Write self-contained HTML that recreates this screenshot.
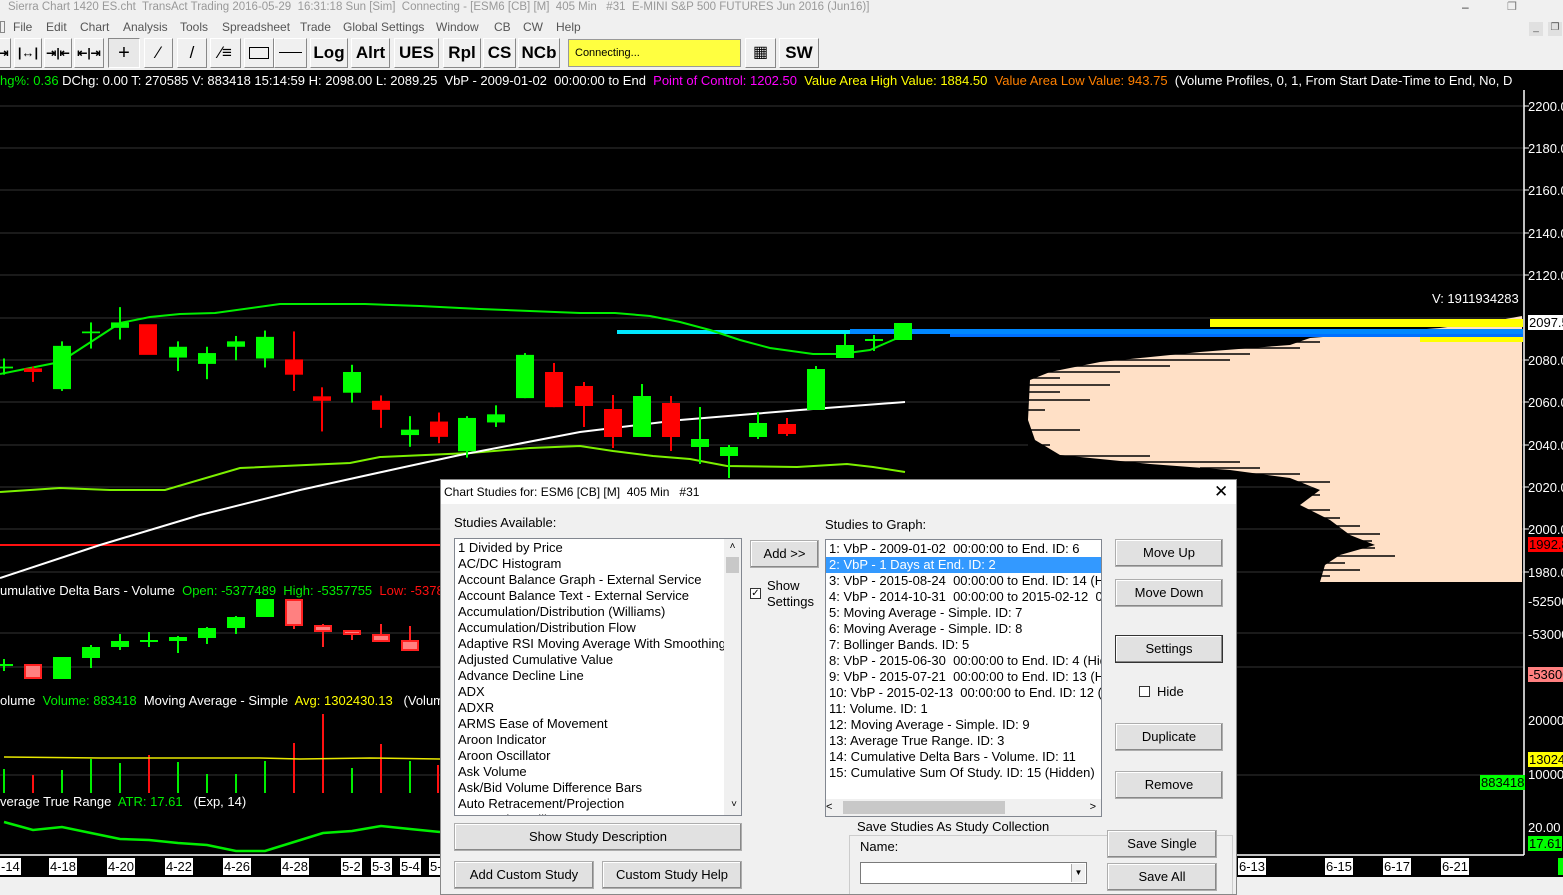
<!DOCTYPE html>
<html><head><meta charset="utf-8">
<style>
*{margin:0;padding:0;box-sizing:border-box}
body{width:1563px;height:895px;overflow:hidden;background:#f0f0f0;font-family:"Liberation Sans",sans-serif;position:relative}
.abs{position:absolute;white-space:pre}
.title{left:8px;top:0;font-size:11.5px;color:#999;line-height:14px}
.menu{top:20px;font-size:12px;color:#555;line-height:14px}
.tb{position:absolute;top:38px;height:30px;background:#f0f0f0;border:1px solid;border-color:#fff #888 #888 #fff;font-weight:bold;font-size:17px;text-align:center;line-height:28px;color:#000}
.ax{position:absolute;left:1528px;font-size:13px;color:#fff;line-height:15px;white-space:nowrap}
.dt{position:absolute;top:858px;background:#fff;color:#000;font-size:13px;line-height:17px;padding:0 1px;white-space:nowrap}
.dlg{position:absolute;left:440px;top:479px;width:797px;height:416px;background:#f0f0f0;border:1px solid #888;overflow:hidden}
.dlg .t{position:absolute;left:0;top:0;width:795px;height:24px;background:#fff;font-size:12px;line-height:24px;padding-left:3px;white-space:pre}
.btn{position:absolute;background:#e1e1e1;border:1px solid #adadad;font-size:13px;text-align:center;color:#000;box-shadow:inset -1px -1px 0 #888,inset 1px 1px 0 #fff}
.lst{position:absolute;background:#fff;border:1px solid #828790;font-size:13px;line-height:16px;overflow:hidden}
.lst div{white-space:pre;padding-left:3px;height:16px}
.lbl{position:absolute;font-size:13px;white-space:nowrap}
</style></head><body>
<div class="abs title">Sierra Chart 1420 ES.cht  TransAct Trading 2016-05-29  16:31:18 Sun [Sim]  Connecting - [ESM6 [CB] [M]  405 Min   #31  E-MINI S&amp;P 500 FUTURES Jun 2016 (Jun16)]</div>
<div class="abs" style="left:1462px;top:0;font-size:12px;color:#333">–</div>
<div class="abs" style="left:1507px;top:0;font-size:11px;color:#777">❐</div>
<div class="abs" style="left:1529px;top:22px;width:14px;height:14px;background:#e0e0e0;font-size:10px;text-align:center;color:#555">_</div>
<div class="abs" style="left:1548px;top:22px;width:14px;height:14px;background:#e0e0e0;font-size:10px;text-align:center;color:#555">❐</div>
<div class="abs menu" style="left:0;width:5px;height:12px;border:1px solid #888;top:21px"></div>
<div class="abs menu" style="left:13px">File</div><div class="abs menu" style="left:46px">Edit</div><div class="abs menu" style="left:80px">Chart</div><div class="abs menu" style="left:123px">Analysis</div><div class="abs menu" style="left:180px">Tools</div><div class="abs menu" style="left:222px">Spreadsheet</div><div class="abs menu" style="left:300px">Trade</div><div class="abs menu" style="left:343px">Global Settings</div><div class="abs menu" style="left:436px">Window</div><div class="abs menu" style="left:494px">CB</div><div class="abs menu" style="left:523px">CW</div><div class="abs menu" style="left:556px">Help</div>
<div class="tb" style="left:-4px;width:15px;font-size:12px">⇥</div>
<div class="tb" style="left:14px;width:28px;font-size:13px">|↔|</div>
<div class="tb" style="left:44px;width:28px;font-size:12px">⇥|⇤</div>
<div class="tb" style="left:74px;width:30px;font-size:12px">⇤|⇥</div>
<div class="tb" style="left:108px;width:32px;font-size:20px;font-weight:normal;border-color:#888 #fff #fff #888;background:#e8e8e8">+</div>
<div class="tb" style="left:144px;width:29px;font-weight:normal">⁄</div>
<div class="tb" style="left:177px;width:30px;font-weight:normal">/</div>
<div class="tb" style="left:210px;width:31px;font-weight:normal">⁄≡</div>
<div class="tb" style="left:244px;width:30px"><div style="margin:8px 4px;height:12px;border:1px solid #000"></div></div>
<div class="tb" style="left:274px;width:33px"><div style="margin:13px 4px;height:1px;background:#000"></div></div>
<div class="tb" style="left:310px;width:38px">Log</div>
<div class="tb" style="left:351px;width:39px">Alrt</div>
<div class="tb" style="left:394px;width:45px">UES</div>
<div class="tb" style="left:443px;width:38px">Rpl</div>
<div class="tb" style="left:483px;width:33px">CS</div>
<div class="tb" style="left:518px;width:42px">NCb</div>
<div class="abs" style="left:568px;top:39px;width:173px;height:28px;background:#ffff40;border:1px solid #999;font-size:11px;line-height:26px;padding-left:6px">Connecting...</div>
<div class="tb" style="left:745px;width:31px;font-size:16px;font-weight:normal">▦</div>
<div class="tb" style="left:779px;width:40px">SW</div>

<svg style="position:absolute;left:0;top:70px" width="1563" height="807" viewBox="0 70 1563 807">
<rect x="0" y="70" width="1563" height="807" fill="#000"/>
<g stroke="#333" stroke-width="1">
<line x1="0" y1="106" x2="1523" y2="106"/><line x1="0" y1="148" x2="1523" y2="148"/><line x1="0" y1="190" x2="1523" y2="190"/><line x1="0" y1="233" x2="1523" y2="233"/><line x1="0" y1="275" x2="1523" y2="275"/><line x1="0" y1="318" x2="1523" y2="318"/><line x1="0" y1="360" x2="1523" y2="360"/><line x1="0" y1="402" x2="1523" y2="402"/><line x1="0" y1="445" x2="1523" y2="445"/><line x1="0" y1="487" x2="1523" y2="487"/><line x1="0" y1="529" x2="1523" y2="529"/><line x1="0" y1="572" x2="1523" y2="572"/>
<line x1="0" y1="633" x2="1523" y2="633"/><line x1="0" y1="667" x2="1523" y2="667"/><line x1="0" y1="775" x2="1523" y2="775"/>
</g>
<polygon fill="#ffe0c6" points="1522,316 1500,320 1440,328 1310,338 1290,345 1200,352 1100,362 1050,372 1030,380 1028,420 1035,440 1060,455 1150,464 1230,470 1290,478 1320,490 1300,505 1330,520 1350,535 1375,545 1340,555 1325,565 1320,582 1522,582"/>
<g stroke="#000" stroke-width="1.5">
<line x1="1200" y1="342" x2="1320" y2="342"/><line x1="1150" y1="348" x2="1300" y2="348"/><line x1="1100" y1="354" x2="1250" y2="354"/><line x1="1060" y1="360" x2="1230" y2="360"/><line x1="1040" y1="366" x2="1170" y2="366"/><line x1="1030" y1="372" x2="1120" y2="372"/><line x1="1030" y1="378" x2="1060" y2="378"/>
<line x1="1028" y1="385" x2="1110" y2="385"/><line x1="1028" y1="392" x2="1060" y2="392"/><line x1="1028" y1="400" x2="1090" y2="400"/><line x1="1028" y1="410" x2="1045" y2="410"/><line x1="1028" y1="430" x2="1080" y2="430"/><line x1="1028" y1="445" x2="1050" y2="445"/>
<line x1="1060" y1="456" x2="1150" y2="456"/><line x1="1100" y1="462" x2="1240" y2="462"/><line x1="1200" y1="468" x2="1260" y2="468"/><line x1="1230" y1="474" x2="1300" y2="474"/>
<line x1="1280" y1="482" x2="1330" y2="482"/><line x1="1290" y1="495" x2="1320" y2="495"/><line x1="1300" y1="510" x2="1330" y2="510"/><line x1="1300" y1="518" x2="1340" y2="518"/><line x1="1320" y1="526" x2="1360" y2="526"/><line x1="1330" y1="534" x2="1380" y2="534"/>
<line x1="1330" y1="541" x2="1372" y2="541"/><line x1="1330" y1="548" x2="1375" y2="548"/><line x1="1320" y1="556" x2="1395" y2="556"/><line x1="1320" y1="563" x2="1345" y2="563"/><line x1="1320" y1="570" x2="1360" y2="570"/><line x1="1320" y1="576" x2="1330" y2="576"/>
</g>
<rect x="1210" y="319" width="313" height="8" fill="#ffff00"/>
<rect x="1420" y="337" width="103" height="5" fill="#ffff00"/>
<rect x="617" y="330" width="240" height="4" fill="#00e8ff"/>
<rect x="850" y="329" width="673" height="5" fill="#0088ff"/>
<rect x="950" y="334" width="573" height="3" fill="#0070ff"/>
<line x1="0" y1="545" x2="440" y2="545" stroke="#ff1010" stroke-width="2"/>
<polyline fill="none" stroke="#00ee00" stroke-width="2" points="0,374 60,362 120,323 150,317 180,314 215,313 280,304 365,304 420,306 480,309 580,313 615,313 650,316 680,322 710,330 740,340 770,348 813,354 840,354 870,350 893,340 905,335"/>
<polyline fill="none" stroke="#7cf000" stroke-width="2" points="0,492 60,488 110,490 165,490 240,468 350,463 380,457 470,453 530,448 580,446 613,451 653,456 690,459 727,466 797,467 847,464 873,467 905,472"/>
<polyline fill="none" stroke="#fff" stroke-width="2" points="0,578 100,545 200,515 300,490 400,468 460,455 580,432 680,420 800,410 905,402"/>
<g stroke-width="2">
<g transform="translate(0,290) scale(1,0.901) translate(0,-290)">
<g stroke="#00ff00" fill="#00ff00">
<line x1="4" y1="366" x2="4" y2="384"/><line x1="-5" y1="376" x2="13" y2="376"/>
<line x1="62" y1="347" x2="62" y2="402"/><rect x="53" y="352" width="18" height="48" stroke="none"/>
<line x1="91" y1="326" x2="91" y2="355"/><line x1="82" y1="337" x2="100" y2="337"/>
<line x1="120" y1="309" x2="120" y2="345"/><rect x="111" y="326" width="18" height="6" stroke="none"/>
<line x1="178" y1="347" x2="178" y2="380"/><rect x="169" y="353" width="18" height="12" stroke="none"/>
<line x1="207" y1="353" x2="207" y2="389"/><rect x="198" y="360" width="18" height="12" stroke="none"/>
<line x1="236" y1="341" x2="236" y2="368"/><rect x="227" y="347" width="18" height="6" stroke="none"/>
<line x1="265" y1="335" x2="265" y2="376"/><rect x="256" y="342" width="18" height="24" stroke="none"/>
<line x1="352" y1="373" x2="352" y2="415"/><rect x="343" y="381" width="18" height="23" stroke="none"/>
<line x1="410" y1="430" x2="410" y2="464"/><rect x="401" y="445" width="18" height="6" stroke="none"/>
<line x1="467" y1="430" x2="467" y2="476"/><rect x="458" y="432" width="18" height="37" stroke="none"/>
<line x1="496" y1="418" x2="496" y2="442"/><rect x="487" y="428" width="18" height="9" stroke="none"/>
<line x1="525" y1="360" x2="525" y2="410"/><rect x="516" y="362" width="18" height="48" stroke="none"/>
</g>
<g stroke="#ff0000" fill="#ff0000">
<line x1="33" y1="375" x2="33" y2="392"/><rect x="24" y="377" width="18" height="4" stroke="none"/>
<rect x="139" y="328" width="18" height="34" stroke="none"/>
<line x1="294" y1="336" x2="294" y2="402"/><rect x="285" y="367" width="18" height="17" stroke="none"/>
<line x1="322" y1="398" x2="322" y2="447"/><rect x="313" y="408" width="18" height="5" stroke="none"/>
<line x1="381" y1="407" x2="381" y2="443"/><rect x="372" y="413" width="18" height="10" stroke="none"/>
<line x1="439" y1="426" x2="439" y2="460"/><rect x="430" y="436" width="18" height="17" stroke="none"/>
<line x1="554" y1="371" x2="554" y2="420"/><rect x="545" y="381" width="18" height="39" stroke="none"/>
</g>
</g>
<g stroke="#00ff00" fill="#00ff00">
<line x1="642" y1="384" x2="642" y2="437"/><rect x="633" y="396" width="18" height="41" stroke="none"/>
<line x1="700" y1="407" x2="700" y2="464"/><rect x="691" y="439" width="18" height="8" stroke="none"/>
<line x1="729" y1="445" x2="729" y2="478"/><rect x="720" y="447" width="18" height="9" stroke="none"/>
<line x1="758" y1="412" x2="758" y2="439"/><rect x="749" y="423" width="18" height="14" stroke="none"/>
<line x1="816" y1="366" x2="816" y2="410"/><rect x="807" y="369" width="18" height="41" stroke="none"/>
<line x1="845" y1="334" x2="845" y2="358"/><rect x="836" y="345" width="18" height="13" stroke="none"/>
<line x1="874" y1="335" x2="874" y2="351"/><line x1="865" y1="340" x2="883" y2="340"/>
<rect x="894" y="323" width="18" height="17" stroke="none"/>
</g>
<g stroke="#ff0000" fill="#ff0000">
<line x1="584" y1="382" x2="584" y2="427"/><rect x="575" y="386" width="18" height="20" stroke="none"/>
<line x1="613" y1="395" x2="613" y2="448"/><rect x="604" y="409" width="18" height="28" stroke="none"/>
<line x1="671" y1="396" x2="671" y2="451"/><rect x="662" y="403" width="18" height="34" stroke="none"/>
<line x1="787" y1="418" x2="787" y2="436"/><rect x="778" y="424" width="18" height="10" stroke="none"/>
</g>
<g stroke="#00ff00" fill="#00ff00">
<line x1="-5" y1="665" x2="13" y2="665"/><line x1="4" y1="659" x2="4" y2="671"/>
<rect x="53" y="657" width="18" height="22" stroke="none"/>
<line x1="91" y1="645" x2="91" y2="668"/><rect x="82" y="647" width="18" height="11" stroke="none"/>
<line x1="120" y1="634" x2="120" y2="650"/><rect x="111" y="641" width="18" height="6" stroke="none"/>
<line x1="149" y1="632" x2="149" y2="647"/><line x1="140" y1="641" x2="158" y2="641"/>
<line x1="178" y1="636" x2="178" y2="653"/><rect x="169" y="637" width="18" height="4" stroke="none"/>
<line x1="207" y1="627" x2="207" y2="644"/><rect x="198" y="628" width="18" height="10" stroke="none"/>
<line x1="236" y1="616" x2="236" y2="634"/><rect x="227" y="617" width="18" height="11" stroke="none"/>
<rect x="256" y="599" width="18" height="18" stroke="none"/>
</g>
<g stroke="#ff2020" fill="#ff8080">
<rect x="25" y="665" width="16" height="13"/>
<rect x="286" y="600" width="16" height="25"/><line x1="294" y1="625" x2="294" y2="629"/>
<line x1="323" y1="624" x2="323" y2="647"/><rect x="315" y="626" width="16" height="5"/>
<line x1="352" y1="630" x2="352" y2="640"/><rect x="344" y="631" width="16" height="3"/>
<line x1="381" y1="624" x2="381" y2="642"/><rect x="373" y="635" width="16" height="6"/>
<line x1="410" y1="626" x2="410" y2="650"/><rect x="402" y="641" width="16" height="9"/>
</g>
<g stroke="#00ee00"><line x1="4" y1="769" x2="4" y2="793"/><line x1="62" y1="770" x2="62" y2="793"/><line x1="91" y1="759" x2="91" y2="793"/><line x1="120" y1="763" x2="120" y2="793"/><line x1="178" y1="762" x2="178" y2="793"/><line x1="207" y1="774" x2="207" y2="793"/><line x1="236" y1="774" x2="236" y2="793"/><line x1="265" y1="761" x2="265" y2="793"/><line x1="352" y1="768" x2="352" y2="793"/><line x1="410" y1="761" x2="410" y2="793"/></g>
<g stroke="#ff1010"><line x1="33" y1="775" x2="33" y2="793"/><line x1="149" y1="755" x2="149" y2="793"/><line x1="294" y1="743" x2="294" y2="793"/><line x1="323" y1="714" x2="323" y2="793"/><line x1="381" y1="744" x2="381" y2="793"/><line x1="438" y1="765" x2="438" y2="793"/></g>
</g>
<polyline fill="none" stroke="#e8e800" stroke-width="1.5" points="4,757 100,758 200,758 260,758 300,759 370,758 440,759"/>
<polyline fill="none" stroke="#00ee00" stroke-width="2.5" points="4,822 33,830 62,827 91,833 120,839 149,840 178,843 207,845 236,851 265,851 294,842 323,833 352,831 381,826 410,829 440,832"/>
<line x1="1524" y1="90" x2="1524" y2="855" stroke="#fff" stroke-width="1.5"/>
<line x1="0" y1="855" x2="1524" y2="855" stroke="#fff" stroke-width="1.5"/>
<g stroke="#fff"><line x1="1524" y1="106" x2="1529" y2="106"/><line x1="1524" y1="148" x2="1529" y2="148"/><line x1="1524" y1="190" x2="1529" y2="190"/><line x1="1524" y1="233" x2="1529" y2="233"/><line x1="1524" y1="275" x2="1529" y2="275"/><line x1="1524" y1="360" x2="1529" y2="360"/><line x1="1524" y1="402" x2="1529" y2="402"/><line x1="1524" y1="445" x2="1529" y2="445"/><line x1="1524" y1="487" x2="1529" y2="487"/><line x1="1524" y1="529" x2="1529" y2="529"/><line x1="1524" y1="572" x2="1529" y2="572"/></g>
</svg>
<div class="abs" style="left:0;top:73px;font-size:13px;color:#fff;line-height:15px"><span style="color:#00ee00">hg%: 0.36</span> DChg: 0.00 T: 270585 V: 883418 15:14:59 H: 2098.00 L: 2089.25  VbP - 2009-01-02  00:00:00 to End  <span style="color:#ff00ff">Point of Control: 1202.50</span>  <span style="color:#ffff00">Value Area High Value: 1884.50</span>  <span style="color:#ff8000">Value Area Low Value: 943.75</span>  (Volume Profiles, 0, 1, From Start Date-Time to End, No, D</div>
<div class="abs" style="left:1432px;top:291px;font-size:13px;color:#fff">V: 1911934283</div>
<div class="abs" style="left:0;top:583px;font-size:13px;color:#fff">umulative Delta Bars - Volume  <span style="color:#00ee00">Open: -5377489  High: -5357755</span>  <span style="color:#ff1010">Low: -5378</span></div>
<div class="abs" style="left:0;top:693px;font-size:13px;color:#fff">olume  <span style="color:#00ee00">Volume: 883418</span>  Moving Average - Simple  <span style="color:#ffff00">Avg: 1302430.13</span>   (Volum</div>
<div class="abs" style="left:0;top:794px;font-size:13px;color:#fff">verage True Range  <span style="color:#00ee00">ATR: 17.61</span>   (Exp, 14)</div>
<div class="ax" style="top:99px">2200.0</div><div class="ax" style="top:141px">2180.0</div><div class="ax" style="top:183px">2160.0</div><div class="ax" style="top:226px">2140.0</div><div class="ax" style="top:268px">2120.0</div>
<div class="ax" style="top:315px;background:#fff;color:#000;padding-left:1px">2097.5</div>
<div class="ax" style="top:353px">2080.0</div><div class="ax" style="top:395px">2060.0</div><div class="ax" style="top:438px">2040.0</div><div class="ax" style="top:480px">2020.0</div><div class="ax" style="top:522px">2000.0</div>
<div class="ax" style="top:537px;background:#ff0000;color:#000;padding-left:1px">1992.8</div>
<div class="ax" style="top:565px">1980.0</div><div class="ax" style="top:594px">-52500</div><div class="ax" style="top:627px">-53000</div>
<div class="ax" style="top:667px;background:#ff8080;color:#000;padding-left:1px">-53600</div>
<div class="ax" style="top:713px">20000</div>
<div class="ax" style="top:752px;background:#ffff00;color:#000;padding-left:1px">13024</div>
<div class="ax" style="top:767px">10000</div>
<div class="abs" style="left:1480px;top:775px;background:#00ff00;color:#000;font-size:13px;line-height:15px;padding:0 1px">883418</div>
<div class="ax" style="top:820px">20.00</div>
<div class="ax" style="top:836px;background:#00ff00;color:#000;padding-left:1px">17.61</div>
<div class="dt" style="left:0">-14</div><div class="dt" style="left:49px">4-18</div><div class="dt" style="left:107px">4-20</div><div class="dt" style="left:165px">4-22</div><div class="dt" style="left:223px">4-26</div><div class="dt" style="left:281px">4-28</div><div class="dt" style="left:341px">5-2</div><div class="dt" style="left:371px">5-3</div><div class="dt" style="left:400px">5-4</div><div class="dt" style="left:429px">5-</div>
<div class="dt" style="left:1238px">6-13</div><div class="dt" style="left:1325px">6-15</div><div class="dt" style="left:1383px">6-17</div><div class="dt" style="left:1441px">6-21</div>
<div class="abs" style="left:1558px;top:858px;width:5px;height:17px;background:#00ff00"></div>

<div class="dlg">
<div class="t">Chart Studies for: ESM6 [CB] [M]  405 Min   #31</div>
<div class="abs" style="left:773px;top:2px;font-size:17px">✕</div>
<div class="lbl" style="left:13px;top:35px">Studies Available:</div>
<div class="lst" style="left:13px;top:58px;width:288px;height:278px;padding-top:1px">
<div>1 Divided by Price</div><div>AC/DC Histogram</div><div>Account Balance Graph - External Service</div><div>Account Balance Text - External Service</div><div>Accumulation/Distribution (Williams)</div><div>Accumulation/Distribution Flow</div><div>Adaptive RSI Moving Average With Smoothing</div><div>Adjusted Cumulative Value</div><div>Advance Decline Line</div><div>ADX</div><div>ADXR</div><div>ARMS Ease of Movement</div><div>Aroon Indicator</div><div>Aroon Oscillator</div><div>Ask Volume</div><div>Ask/Bid Volume Difference Bars</div><div>Auto Retracement/Projection</div><div>Automatic Trailing</div>
<div style="position:absolute;right:0;top:0;width:17px;height:276px;background:#f0f0f0;padding:0;font-size:10px;text-align:center">˄<div style="margin:2px 2px;height:16px;background:#c8c8c8"></div><div style="position:absolute;bottom:2px;width:17px">˅</div></div>
</div>
<div class="btn" style="left:309px;top:60px;width:69px;height:28px;line-height:26px">Add &gt;&gt;</div>
<div class="abs" style="left:309px;top:108px;width:11px;height:11px;border:1px solid #333;background:#fff;font-size:10px;line-height:9px;text-align:center">✓</div>
<div class="lbl" style="left:326px;top:98px;line-height:16px">Show<br>Settings</div>
<div class="lbl" style="left:384px;top:37px">Studies to Graph:</div>
<div class="lst" style="left:384px;top:59px;width:277px;height:278px;padding-top:1px">
<div>1: VbP - 2009-01-02  00:00:00 to End. ID: 6</div><div style="background:#3399ff;color:#fff">2: VbP - 1 Days at End. ID: 2</div><div>3: VbP - 2015-08-24  00:00:00 to End. ID: 14 (Hidden)</div><div>4: VbP - 2014-10-31  00:00:00 to 2015-02-12  00:00</div><div>5: Moving Average - Simple. ID: 7</div><div>6: Moving Average - Simple. ID: 8</div><div>7: Bollinger Bands. ID: 5</div><div>8: VbP - 2015-06-30  00:00:00 to End. ID: 4 (Hidden)</div><div>9: VbP - 2015-07-21  00:00:00 to End. ID: 13 (Hidden)</div><div>10: VbP - 2015-02-13  00:00:00 to End. ID: 12 (Hidden)</div><div>11: Volume. ID: 1</div><div>12: Moving Average - Simple. ID: 9</div><div>13: Average True Range. ID: 3</div><div>14: Cumulative Delta Bars - Volume. ID: 11</div><div>15: Cumulative Sum Of Study. ID: 15 (Hidden)</div>
<div style="position:absolute;left:0;bottom:0;width:275px;height:17px;background:#f0f0f0;padding:0;font-size:11px">&lt;<div style="position:absolute;left:17px;top:2px;width:162px;height:13px;background:#c8c8c8"></div><span style="position:absolute;right:5px">&gt;</span></div>
</div>
<div class="btn" style="left:674px;top:59px;width:108px;height:28px;line-height:26px">Move Up</div>
<div class="btn" style="left:674px;top:99px;width:108px;height:28px;line-height:26px">Move Down</div>
<div class="btn" style="left:674px;top:155px;width:108px;height:28px;line-height:26px;border-color:#333">Settings</div>
<div class="abs" style="left:698px;top:206px;width:11px;height:11px;border:1px solid #333;background:#fff"></div>
<div class="lbl" style="left:716px;top:204px">Hide</div>
<div class="btn" style="left:674px;top:243px;width:108px;height:28px;line-height:26px">Duplicate</div>
<div class="btn" style="left:674px;top:291px;width:108px;height:28px;line-height:26px">Remove</div>
<div class="btn" style="left:13px;top:343px;width:288px;height:28px;line-height:26px">Show Study Description</div>
<div class="btn" style="left:13px;top:381px;width:140px;height:28px;line-height:26px">Add Custom Study</div>
<div class="btn" style="left:161px;top:381px;width:140px;height:28px;line-height:26px">Custom Study Help</div>
<div class="abs" style="left:408px;top:355px;width:384px;height:70px;border:1px solid #ccc"></div>
<div class="lbl" style="left:414px;top:339px;background:#f0f0f0;padding:0 2px">Save Studies As Study Collection</div>
<div class="lbl" style="left:419px;top:359px">Name:</div>
<div class="abs" style="left:419px;top:382px;width:227px;height:22px;background:#fff;border:1px solid #7a7a7a"><div style="position:absolute;right:1px;top:1px;width:14px;height:18px;background:#f0f0f0;border-left:1px solid #aaa;font-size:8px;text-align:center;line-height:18px">▼</div></div>
<div class="btn" style="left:666px;top:350px;width:110px;height:28px;line-height:26px">Save Single</div>
<div class="btn" style="left:666px;top:383px;width:110px;height:28px;line-height:26px">Save All</div>
</div>
</body></html>
